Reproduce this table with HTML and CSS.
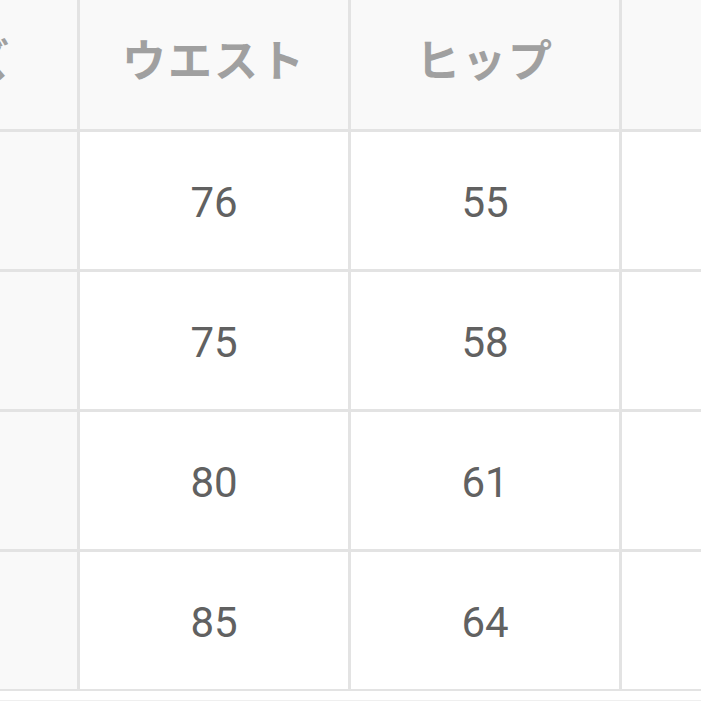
FILE: index.html
```html
<!DOCTYPE html>
<html lang="ja">
<head>
<meta charset="utf-8">
<link rel="stylesheet" href="styles.css">
</head>
<body>
<div class="sheet">
  <div class="grid">
    <div class="cell head">サイズ</div>
    <div class="cell head">ウエスト</div>
    <div class="cell head">ヒップ</div>
    <div class="cell head">股下</div>

    <div class="cell side"></div>
    <div class="cell num">76</div>
    <div class="cell num">55</div>
    <div class="cell num"></div>

    <div class="cell side"></div>
    <div class="cell num">75</div>
    <div class="cell num">58</div>
    <div class="cell num"></div>

    <div class="cell side"></div>
    <div class="cell num">80</div>
    <div class="cell num">61</div>
    <div class="cell num"></div>

    <div class="cell side"></div>
    <div class="cell num">85</div>
    <div class="cell num">64</div>
    <div class="cell num"></div>
  </div>
  <div class="foot"></div>
</div>
</body>
</html>
```

FILE: styles.css
```css
html, body {
  margin: 0;
  padding: 0;
  background: #ffffff;
  overflow: hidden;
}
.sheet {
  width: 701px;
  height: 701px;
  overflow: hidden;
}
.grid {
  display: grid;
  grid-template-columns: repeat(4, 268px);
  grid-template-rows: 129px repeat(4, 137px);
  gap: 3px;
  padding-bottom: 2px;
  background: #e3e3e3;
  margin-left: -191px;
  width: max-content;
}
.cell {
  display: flex;
  align-items: center;
  justify-content: center;
  background: #ffffff;
  font-family: Roboto, "Noto Sans CJK JP", sans-serif;
}
.head {
  background: #f9f9f9;
  color: #a0a0a0;
  font-family: "Noto Sans CJK JP", sans-serif;
  font-weight: 700;
  font-size: 44px;
  letter-spacing: 2px;
  padding-bottom: 14px;
  box-sizing: border-box;
}
.side {
  background: #f9f9f9;
}
.num {
  color: #616161;
  font-size: 42px;
  font-weight: 400;
  padding-top: 4px;
  box-sizing: border-box;
}
.foot {
  margin-top: 9px;
  border-top: 1px solid #efefef;
}
```
